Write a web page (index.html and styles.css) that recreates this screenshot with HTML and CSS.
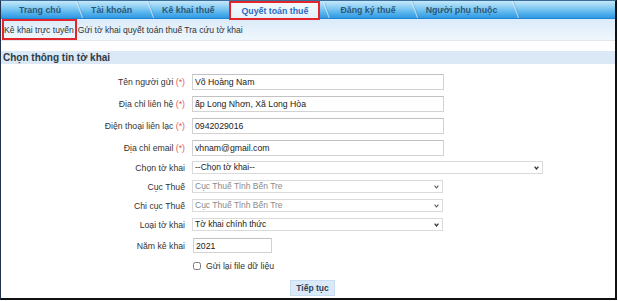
FILE: index.html
```html
<!DOCTYPE html>
<html lang="vi">
<head>
<meta charset="utf-8">
<title>Quyết toán thuế</title>
<link rel="stylesheet" href="styles.css">
</head>
<body>
<div class="frame">
  <nav class="tabs">
    <a class="tab">Trang chủ</a>
    <a class="tab">Tài khoản</a>
    <a class="tab">Kê khai thuế</a>
    <a class="tab active">Quyết toán thuế</a>
    <a class="tab">Đăng ký thuế</a>
    <a class="tab">Người phụ thuộc</a>
  </nav>
  <div class="submenu">
    <a class="sub current">Kê khai trực tuyến</a>
    <a class="sub">Gửi tờ khai quyết toán thuế</a>
    <a class="sub">Tra cứu tờ khai</a>
  </div>
  <div class="section-title">Chọn thông tin tờ khai</div>
  <form class="form">
    <div class="row">
      <label class="lbl">Tên người gửi <span class="req">(*)</span></label>
      <input class="field w-text" type="text" value="Võ Hoàng Nam">
    </div>
    <div class="row">
      <label class="lbl">Địa chỉ liên hệ <span class="req">(*)</span></label>
      <input class="field w-text" type="text" value="ấp Long Nhơn, Xã Long Hòa">
    </div>
    <div class="row">
      <label class="lbl">Điện thoại liên lạc <span class="req">(*)</span></label>
      <input class="field w-text" type="text" value="0942029016">
    </div>
    <div class="row">
      <label class="lbl">Địa chỉ email <span class="req">(*)</span></label>
      <input class="field w-text" type="text" value="vhnam@gmail.com">
    </div>
    <div class="row row-sel first-sel">
      <label class="lbl">Chọn tờ khai</label>
      <span class="select w-wide">
        <select><option>--Chọn tờ khai--</option></select>
        <svg viewBox="0 0 5 4"><path d="M0.6 0.7 L2.5 3 L4.4 0.7" fill="none" stroke="#333" stroke-width="1.3"/></svg>
      </span>
    </div>
    <div class="row row-sel">
      <label class="lbl">Cục Thuế</label>
      <span class="select w-sel">
        <select disabled><option>Cục Thuế Tỉnh Bến Tre</option></select>
        <svg viewBox="0 0 5 4"><path d="M0.6 0.7 L2.5 3 L4.4 0.7" fill="none" stroke="#555" stroke-width="1.1"/></svg>
      </span>
    </div>
    <div class="row row-sel">
      <label class="lbl">Chi cục Thuế</label>
      <span class="select w-sel">
        <select disabled><option>Cục Thuế Tỉnh Bến Tre</option></select>
        <svg viewBox="0 0 5 4"><path d="M0.6 0.7 L2.5 3 L4.4 0.7" fill="none" stroke="#555" stroke-width="1.1"/></svg>
      </span>
    </div>
    <div class="row row-sel">
      <label class="lbl">Loại tờ khai</label>
      <span class="select w-sel">
        <select><option>Tờ khai chính thức</option></select>
        <svg viewBox="0 0 5 4"><path d="M0.6 0.7 L2.5 3 L4.4 0.7" fill="none" stroke="#333" stroke-width="1.3"/></svg>
      </span>
    </div>
    <div class="row row-year">
      <label class="lbl">Năm kê khai</label>
      <input class="field w-year" type="text" value="2021">
    </div>
    <div class="row row-check">
      <span class="lbl"></span>
      <label class="check"><input type="checkbox" class="cb"><span>Gửi lại file dữ liệu</span></label>
    </div>
    <div class="btn-row">
      <button type="button" class="btn">Tiếp tục</button>
    </div>
  </form>
</div>
</body>
</html>
```
FILE: styles.css
```css
* { box-sizing: border-box; }
html, body { margin: 0; padding: 0; background: #fff; }
body {
  font-family: "Liberation Sans", Arial, sans-serif;
  font-size: 8.7px;
  color: #333;
}
.frame {
  width: 617px;
  height: 300px;
  border-top: 1px solid #3a6f9c;
  border-left: 1px solid #22344c;
  border-right: 2px solid #111;
  border-bottom: 2px solid #111;
  overflow: hidden;
  display: flex;
  flex-direction: column;
}
.tabs {
  flex: none;
  height: 18px;
  display: flex;
  align-items: stretch;
  padding-left: 3px;
  background: linear-gradient(to bottom, #c4e7fa 0%, #8fd0f4 35%, #55b3ec 70%, #2f98e3 100%);
  border-bottom: 1px solid #1f86d6;
}
.tab {
  position: relative;
  display: flex;
  align-items: center;
  padding: 0 15px;
  font-weight: bold;
  font-size: 8.8px;
  color: #2c5878;
  white-space: nowrap;
}
.tab::after {
  content: "";
  position: absolute;
  top: 0;
  bottom: 0;
  right: -5px;
  width: 2px;
  background: linear-gradient(to right, rgba(255,255,255,0.75), rgba(20,90,160,0.3));
  transform: skewX(20deg);
}
.tab.active {
  margin: 0 5px -2px 0;
  padding: 0 10px;
  border: 2px solid #e2262b;
  background: linear-gradient(#f2f9fe, #e3f1fc);
  color: #2a6cc2;
  z-index: 1;
}
.tab.active::after { right: -10px; }
.submenu {
  flex: none;
  height: 22px;
  display: flex;
  align-items: stretch;
  padding-left: 1px;
  background: linear-gradient(#dbebf9, #eff7fd);
  border-bottom: 1px solid #e3e8ee;
  font-size: 8.6px;
}
.sub {
  display: flex;
  align-items: center;
  padding: 0 1px;
  color: #333;
  white-space: nowrap;
}
.sub.current {
  border: 2px solid #e2262b;
  padding: 0 1px 0 0;
}
.section-title {
  flex: none;
  margin-top: 10px;
  height: 13px;
  background: #dbe8f5;
  padding-left: 2px;
  display: flex;
  align-items: center;
  font-weight: bold;
  font-size: 10px;
  color: #2d3b48;
}
.form {
  padding-top: 10px;
  display: flex;
  flex-direction: column;
}
.row {
  display: flex;
  align-items: center;
  gap: 7px;
  margin-top: 6px;
}
.row:first-child { margin-top: 0; }
.row.first-sel { margin-top: 5px; }
.row.row-year { margin-top: 7px; }
.row.row-check { margin-top: 8px; height: 9px; }
.lbl {
  width: 184px;
  flex: none;
  text-align: right;
  color: #333;
  white-space: nowrap;
}
.req { color: #e0605e; }
.field {
  height: 16px;
  border: 1px solid #d2d2d2;
  border-top-color: #c2c2c2;
  padding: 0 2px;
  font-family: "Liberation Sans", Arial, sans-serif;
  font-size: 8.7px;
  color: #222;
  background: #fff;
  outline: none;
  margin: 0;
}
.w-text { width: 252px; }
.w-year { width: 79px; height: 15px; margin-left: 1px; }
.select {
  position: relative;
  display: block;
  height: 13px;
}
.w-wide { width: 351px; }
.w-sel { width: 251px; }
.select select {
  -webkit-appearance: none;
  appearance: none;
  display: block;
  width: 100%;
  height: 100%;
  margin: 0;
  border: 1px solid #dadada;
  border-radius: 0;
  background: #fff;
  padding: 0 0 0 2px;
  font-family: "Liberation Sans", Arial, sans-serif;
  font-size: 8.5px;
  line-height: 11px;
  color: #222;
  opacity: 1;
}
.select select:disabled { color: #8a8a8a; background: #fff; }
.select svg {
  position: absolute;
  right: 4px;
  top: 5px;
  width: 5px;
  height: 4px;
  pointer-events: none;
}
.check {
  display: flex;
  align-items: center;
  gap: 5px;
  color: #333;
}
.cb {
  width: 8px;
  height: 8px;
  margin: 0 0 0 1px;
}
.btn-row {
  margin-top: 10px;
  padding-left: 289px;
  display: flex;
}
.btn {
  width: 45px;
  height: 16px;
  padding: 0;
  border: 1px solid #c9ddf1;
  background: #dbeaf8;
  font-family: "Liberation Sans", Arial, sans-serif;
  font-weight: bold;
  font-size: 8.5px;
  color: #2b3f56;
}
```
